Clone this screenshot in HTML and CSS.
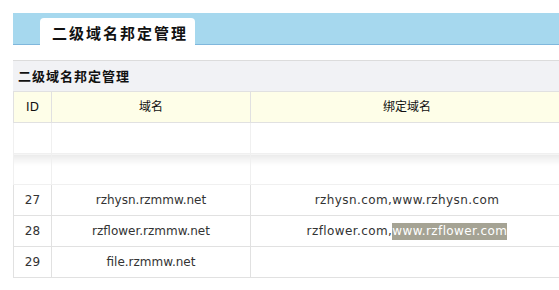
FILE: index.html
```html
<!DOCTYPE html>
<html lang="zh-CN">
<head>
  <meta charset="UTF-8" />
  <title>二级域名邦定管理</title>
  <link rel="stylesheet" href="styles.css">
</head>
<body>
  <div class="page">
    <div class="tab-bar">
      <div class="tab">二级域名邦定管理</div>
    </div>

    <div class="panel">
      <div class="panel-title">二级域名邦定管理</div>
      <table class="domain-list">
        <colgroup>
          <col class="col-id">
          <col class="col-domain">
          <col class="col-bind">
        </colgroup>
        <thead>
          <tr>
            <th>ID</th>
            <th>域名</th>
            <th>绑定域名</th>
          </tr>
        </thead>
        <tbody>
          <tr class="blank">
            <td></td>
            <td></td>
            <td></td>
          </tr>
          <tr class="blank smudge">
            <td></td>
            <td></td>
            <td></td>
          </tr>
          <tr>
            <td>27</td>
            <td>rzhysn.rzmmw.net</td>
            <td class="bind">rzhysn.com,www.rzhysn.com</td>
          </tr>
          <tr>
            <td>28</td>
            <td>rzflower.rzmmw.net</td>
            <td class="bind">rzflower.com,<span class="selected">www.rzflower.com</span></td>
          </tr>
          <tr>
            <td>29</td>
            <td>file.rzmmw.net</td>
            <td class="bind"></td>
          </tr>
        </tbody>
      </table>
    </div>
  </div>
</body>
</html>
```

FILE: styles.css
```css
body {
  font-family: 'DejaVu Sans', Verdana, 'Noto Sans CJK SC', sans-serif;
  background-color: #fff;
  color: #222;
  margin: 0;
  padding: 0;
  overflow: hidden;
}

.page {
  width: 551px;
  padding: 13px 0 0 13px;
}

.tab-bar {
  display: flex;
  align-items: flex-end;
  height: 32px;
  padding-left: 27px;
  background-color: #a6d8ee;
  box-shadow: inset 0 -1px 0 #7fb7dc;
}

.tab {
  width: 143px;
  height: 24px;
  padding: 3px 0 0 12px;
  background-color: #fff;
  border-radius: 4px 4px 0 0;
  font-family: 'Noto Sans CJK SC', sans-serif;
  font-size: 15px;
  font-weight: 700;
  line-height: 24px;
  letter-spacing: 2px;
  color: #111;
}

.panel {
  margin-top: 15px;
}

.panel-title {
  height: 30px;
  padding-left: 5px;
  border-top: 1px solid #dcdcdc;
  background-color: #f1f2f5;
  font-family: 'Noto Sans CJK SC', sans-serif;
  font-size: 13px;
  font-weight: 700;
  line-height: 30px;
  letter-spacing: 1px;
  color: #111;
}

.domain-list {
  width: 551px;
  table-layout: fixed;
  border-collapse: collapse;
  font-size: 12px;
}

.col-id {
  width: 38px;
}

.col-domain {
  width: 199px;
}

.domain-list th,
.domain-list td {
  height: 30px;
  padding: 0;
  border: 1px solid #e1e1e1;
  text-align: center;
  line-height: 30px;
  white-space: nowrap;
}

.domain-list th {
  background-color: #fefee8;
  font-family: 'DejaVu Sans', 'Noto Sans CJK SC', sans-serif;
  font-weight: 400;
  color: #111;
}

.domain-list td {
  color: #333;
}

.domain-list td.bind {
  letter-spacing: 0.4px;
}

.blank td {
  border-color: #f0f0f0;
}

.smudge td {
  background: linear-gradient(#eaeaea, #fff 11px);
}

.selected {
  display: inline-block;
  line-height: 17px;
  vertical-align: middle;
  background-color: #a5a394;
  color: #fff;
}
```
